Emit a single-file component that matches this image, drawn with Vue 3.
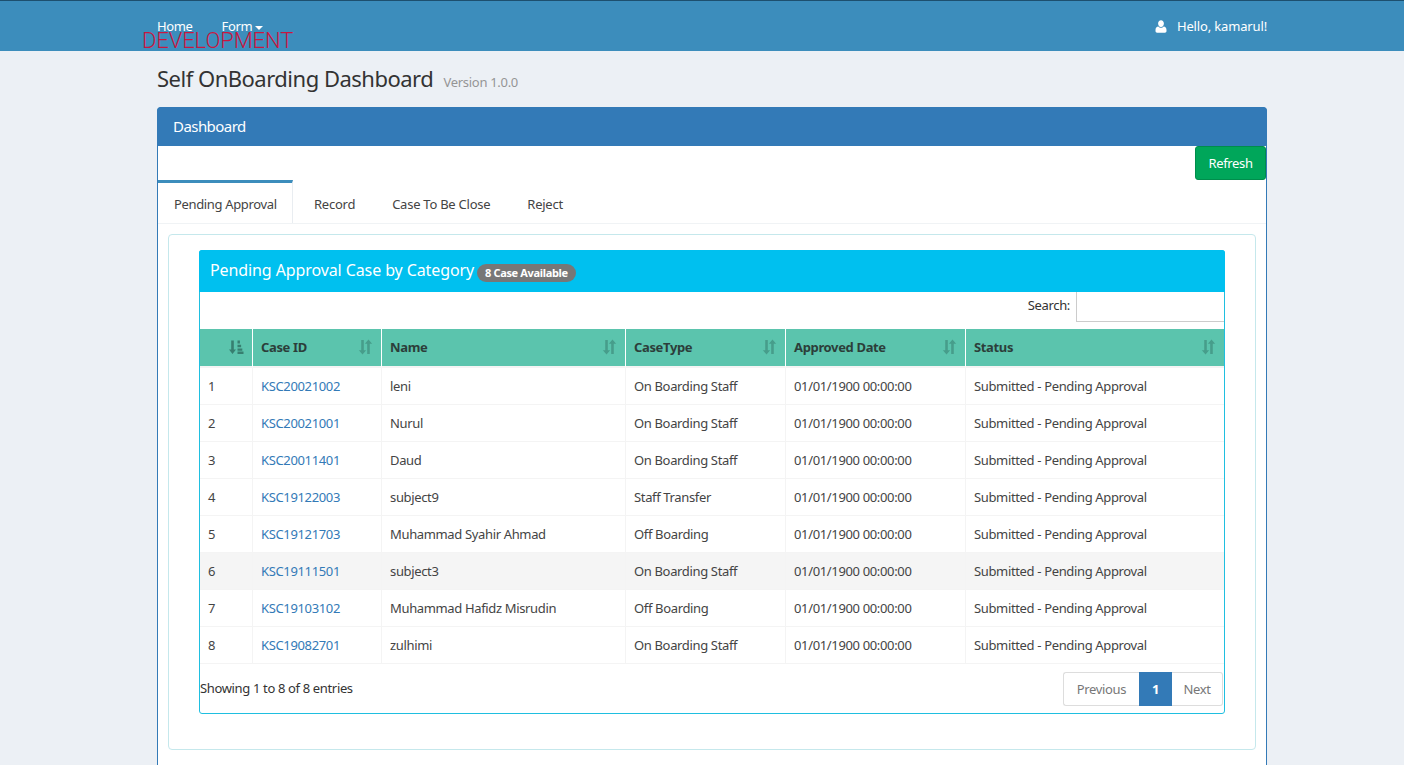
<script setup>
const tabs = ['Pending Approval', 'Record', 'Case To Be Close', 'Reject']
const columns = [
  { label: 'Case ID' },
  { label: 'Name' },
  { label: 'CaseType' },
  { label: 'Approved Date' },
  { label: 'Status' }
]
const rows = [
  { id: 'KSC20021002', name: 'leni', type: 'On Boarding Staff' },
  { id: 'KSC20021001', name: 'Nurul', type: 'On Boarding Staff' },
  { id: 'KSC20011401', name: 'Daud', type: 'On Boarding Staff' },
  { id: 'KSC19122003', name: 'subject9', type: 'Staff Transfer' },
  { id: 'KSC19121703', name: 'Muhammad Syahir Ahmad', type: 'Off Boarding' },
  { id: 'KSC19111501', name: 'subject3', type: 'On Boarding Staff', hover: true },
  { id: 'KSC19103102', name: 'Muhammad Hafidz Misrudin', type: 'Off Boarding' },
  { id: 'KSC19082701', name: 'zulhimi', type: 'On Boarding Staff' }
]
</script>

<template>
  <div class="page">
    <header class="topbar">
      <div class="topbar-inner">
        <nav class="nav">
          <a class="nav-link">Home</a>
          <a class="nav-link">Form <span class="caret"></span></a>
          <span class="dev-mark">DEVELOPMENT</span>
        </nav>
        <div class="user">
          <svg class="user-icon" viewBox="0 0 12 13" width="12" height="13">
            <path d="M6 0.3c1.7 0 2.9 1.4 2.900 3.200S7.700 7 6 7 3.100 5.300 3.100 3.500 4.300 0.300 6 0.300zM3.300 6.400C4 7.200 4.900 7.700 6 7.700s2-.5 2.700-1.300c1.600.2 2.800 1.300 2.800 3.500v1.200c0 1-.7 1.600-1.600 1.600H2.100c-.9 0-1.600-.6-1.600-1.600V9.900c0-2.200 1.200-3.300 2.800-3.500z" fill="#fff" />
          </svg>
          <span>Hello, kamarul!</span>
        </div>
      </div>
    </header>

    <main class="content">
      <h1 class="title">Self OnBoarding Dashboard <small>Version 1.0.0</small></h1>

      <section class="panel">
        <div class="panel-heading">Dashboard</div>
        <div class="panel-body">
          <div class="toolbar">
            <button class="btn-refresh">Refresh</button>
          </div>
          <ul class="tabs">
            <li v-for="(tab, i) in tabs" :key="tab" class="tab" :class="{ active: i === 0 }">{{ tab }}</li>
          </ul>
          <div class="tab-pane">
            <div class="box">
              <div class="box-heading">
                <span class="box-title">Pending Approval Case by Category</span>
                <span class="badge">8 Case Available</span>
              </div>
              <div class="search-row">
                <label>Search:</label>
                <input class="search-input" type="text" />
              </div>
              <table class="table">
                <colgroup>
                  <col style="width: 53px" />
                  <col style="width: 129px" />
                  <col style="width: 244px" />
                  <col style="width: 160px" />
                  <col style="width: 180px" />
                  <col />
                </colgroup>
                <thead>
                  <tr>
                    <th class="sorted">
                      <svg class="sort-icon dim" viewBox="0 0 16 15" width="16" height="16">
                        <path d="M3.200 1h2.600v9h2.200L4.500 14.500 1 10h2.200z" fill="#2f6f62" />
                        <path d="M9.500 1h2.400v3H9.500zM9.500 5.200h3.600v2.600H9.500zM9.500 9h4.800v2.300H9.500zM9.500 12h6v2.400h-6z" fill="#2f6f62" />
                      </svg>
                    </th>
                    <th v-for="col in columns" :key="col.label">
                      {{ col.label }}
                      <svg class="sort-icon faded" viewBox="0 0 14 15" width="15" height="16">
                        <path d="M3 1h2.400v9.500h2.200L4.200 14.500.8 10.500H3z" fill="#2f6f62" />
                        <path d="M8.600 4.500V14H11V4.500h2.200L9.800.5 6.400 4.500z" fill="#2f6f62" />
                      </svg>
                    </th>
                  </tr>
                </thead>
                <tbody>
                  <tr v-for="(row, i) in rows" :key="row.id" :class="{ hover: row.hover }">
                    <td>{{ i + 1 }}</td>
                    <td><a class="link">{{ row.id }}</a></td>
                    <td>{{ row.name }}</td>
                    <td>{{ row.type }}</td>
                    <td>01/01/1900 00:00:00</td>
                    <td>Submitted - Pending Approval</td>
                  </tr>
                </tbody>
              </table>
              <div class="table-footer">
                <div class="info">Showing 1 to 8 of 8 entries</div>
                <div class="pagination">
                  <a class="page-btn first">Previous</a>
                  <a class="page-btn current">1</a>
                  <a class="page-btn last">Next</a>
                </div>
              </div>
            </div>
          </div>
        </div>
      </section>
    </main>
  </div>
</template>

<style>
html, body { margin: 0; height: 100%; overflow: hidden; background: #ecf0f5; }
</style>

<style scoped>
.page {
  height: 765px;
  overflow: hidden;
  background: #ecf0f5;
  font-family: "Noto Sans", "Open Sans", sans-serif;
  font-size: 13px;
  letter-spacing: -0.35px;
  color: #333;
}
.topbar {
  height: 50px;
  background: #3c8dbc;
  border-top: 1px solid #1d4f6e;
}
.topbar-inner {
  width: 1110px;
  margin-left: 157px;
  height: 100%;
  display: flex;
  justify-content: space-between;
  align-items: flex-start;
}
.nav {
  position: relative;
  display: flex;
  gap: 29px;
  padding-top: 16px;
}
.nav-link {
  color: #fff;
  font-size: 13px;
  line-height: 18px;
}
.caret {
  display: inline-block;
  width: 0;
  height: 0;
  vertical-align: middle;
  border-top: 4px solid #fff;
  border-left: 4px solid transparent;
  border-right: 4px solid transparent;
}
.dev-mark {
  position: absolute;
  left: -15px;
  top: 27px;
  color: #c9163f;
  font-family: Roboto, "Liberation Sans", sans-serif;
  font-weight: 300;
  font-size: 22px;
  letter-spacing: -0.1px;
  line-height: 26px;
  white-space: nowrap;
}
.user {
  display: flex;
  align-items: center;
  gap: 10px;
  padding-top: 16px;
  color: #fff;
  line-height: 18px;
  letter-spacing: -0.15px;
}
.content {
  width: 1110px;
  margin-left: 157px;
}
.title {
  margin: 0;
  padding-top: 12px;
  height: 44px;
  box-sizing: content-box;
  font-size: 22px;
  line-height: 30px;
  font-weight: 400;
  letter-spacing: -0.5px;
  color: #333;
}
.title small {
  margin-left: 5px;
  font-size: 13px;
  letter-spacing: -0.3px;
  color: #959595;
}
.panel {
  border: 1px solid #337ab7;
  border-radius: 4px 4px 0 0;
  background: #fff;
  height: 700px;
}
.panel-heading {
  height: 39px;
  margin: -1px -1px 0;
  padding-left: 16px;
  background: #337ab7;
  border-radius: 4px 4px 0 0;
  color: #fff;
  font-size: 15px;
  letter-spacing: -0.55px;
  line-height: 39px;
}
.toolbar {
  display: flex;
  justify-content: flex-end;
  height: 34px;
}
.btn-refresh {
  width: 71px;
  height: 34px;
  padding: 0;
  background: #00a65a;
  border: 1px solid #008d4c;
  border-radius: 3px;
  color: #fff;
  font: inherit;
  letter-spacing: inherit;
}
.tabs {
  display: flex;
  margin: 0;
  padding: 0;
  list-style: none;
  height: 44px;
  box-sizing: border-box;
  border-bottom: 1px solid #f0f3f5;
}
.tab {
  box-sizing: border-box;
  height: 43px;
  padding: 1px 18px 0 19px;
  border-top: 3px solid transparent;
  line-height: 40px;
  letter-spacing: -0.25px;
  color: #444;
}
.tab.active {
  width: 135px;
  margin-right: 2px;
  padding-left: 16px;
  padding-right: 0;
  border-top-color: #3c8dbc;
  border-right: 1px solid #e9edf1;
  letter-spacing: -0.35px;
  white-space: nowrap;
}
.tab-pane {
  box-sizing: border-box;
  margin: 10px 10px 0;
  height: 516px;
  border: 1px solid #c5e8ec;
  border-radius: 4px;
  padding: 15px 30px 0;
}
.box {
  border: 1px solid #1fbfe0;
  border-radius: 3px;
  height: 462px;
}
.box-heading {
  height: 42px;
  margin: -1px -1px 0;
  padding-left: 11px;
  background: #00c0ef;
  border-radius: 3px 3px 0 0;
  display: flex;
  align-items: center;
  gap: 3px;
}
.box-title {
  margin-bottom: 2px;
  color: #fff;
  font-size: 16px;
  letter-spacing: -0.1px;
}
.badge {
  margin-top: 3px;
  padding: 0 8px;
  height: 18px;
  line-height: 18px;
  border-radius: 9px;
  background: #777;
  color: #fff;
  font-size: 11px;
  font-weight: 700;
}
.search-row {
  display: flex;
  justify-content: flex-end;
  align-items: center;
  gap: 6px;
  height: 30px;
}
.search-row label {
  margin-bottom: 5px;
}
.search-input {
  width: 148px;
  height: 30px;
  box-sizing: border-box;
  border: 1px solid #ccc;
  border-top: 0;
  border-right: 0;
  padding: 0;
  background: #fff;
}
.table {
  width: 100%;
  margin-top: 7px;
  table-layout: fixed;
  border-collapse: separate;
  border-spacing: 0;
}
th {
  position: relative;
  height: 39px;
  padding: 0 8px 2px 8px;
  box-sizing: border-box;
  background: #5bc4ad;
  background-clip: padding-box;
  border-right: 1px solid #fff;
  border-bottom: 2px solid #f4f4f4;
  text-align: left;
  font-weight: 700;
  color: #2c3e3a;
}
th:last-child, td:last-child {
  border-right: 0;
}
.sort-icon {
  position: absolute;
  right: 8px;
  top: 10px;
}
.sort-icon.dim {
  opacity: 0.8;
}
.sort-icon.faded {
  opacity: 0.45;
}
td {
  height: 37px;
  padding: 0 8px;
  box-sizing: border-box;
  border-right: 1px solid #f4f4f4;
  border-bottom: 1px solid #f4f4f4;
  color: #444;
  white-space: nowrap;
}
tr.hover td {
  background: #f5f5f5;
}
.link {
  color: #337ab7;
}
.table-footer {
  display: flex;
  justify-content: space-between;
  align-items: flex-start;
  padding: 8px 1px 0 0;
}
.info {
  padding-top: 7px;
  line-height: 18px;
  color: #333;
}
.pagination {
  display: flex;
  height: 34px;
}
.page-btn {
  box-sizing: border-box;
  height: 34px;
  line-height: 33px;
  text-align: center;
  border: 1px solid #ddd;
  color: #777;
  background: #fff;
}
.page-btn.first {
  width: 76px;
  border-radius: 3px 0 0 3px;
  border-right: 0;
}
.page-btn.last {
  width: 51px;
  border-radius: 0 3px 3px 0;
  border-left: 0;
}
.page-btn.current {
  width: 33px;
  background: #337ab7;
  border-color: #337ab7;
  color: #fff;
  font-weight: 700;
}
</style>
